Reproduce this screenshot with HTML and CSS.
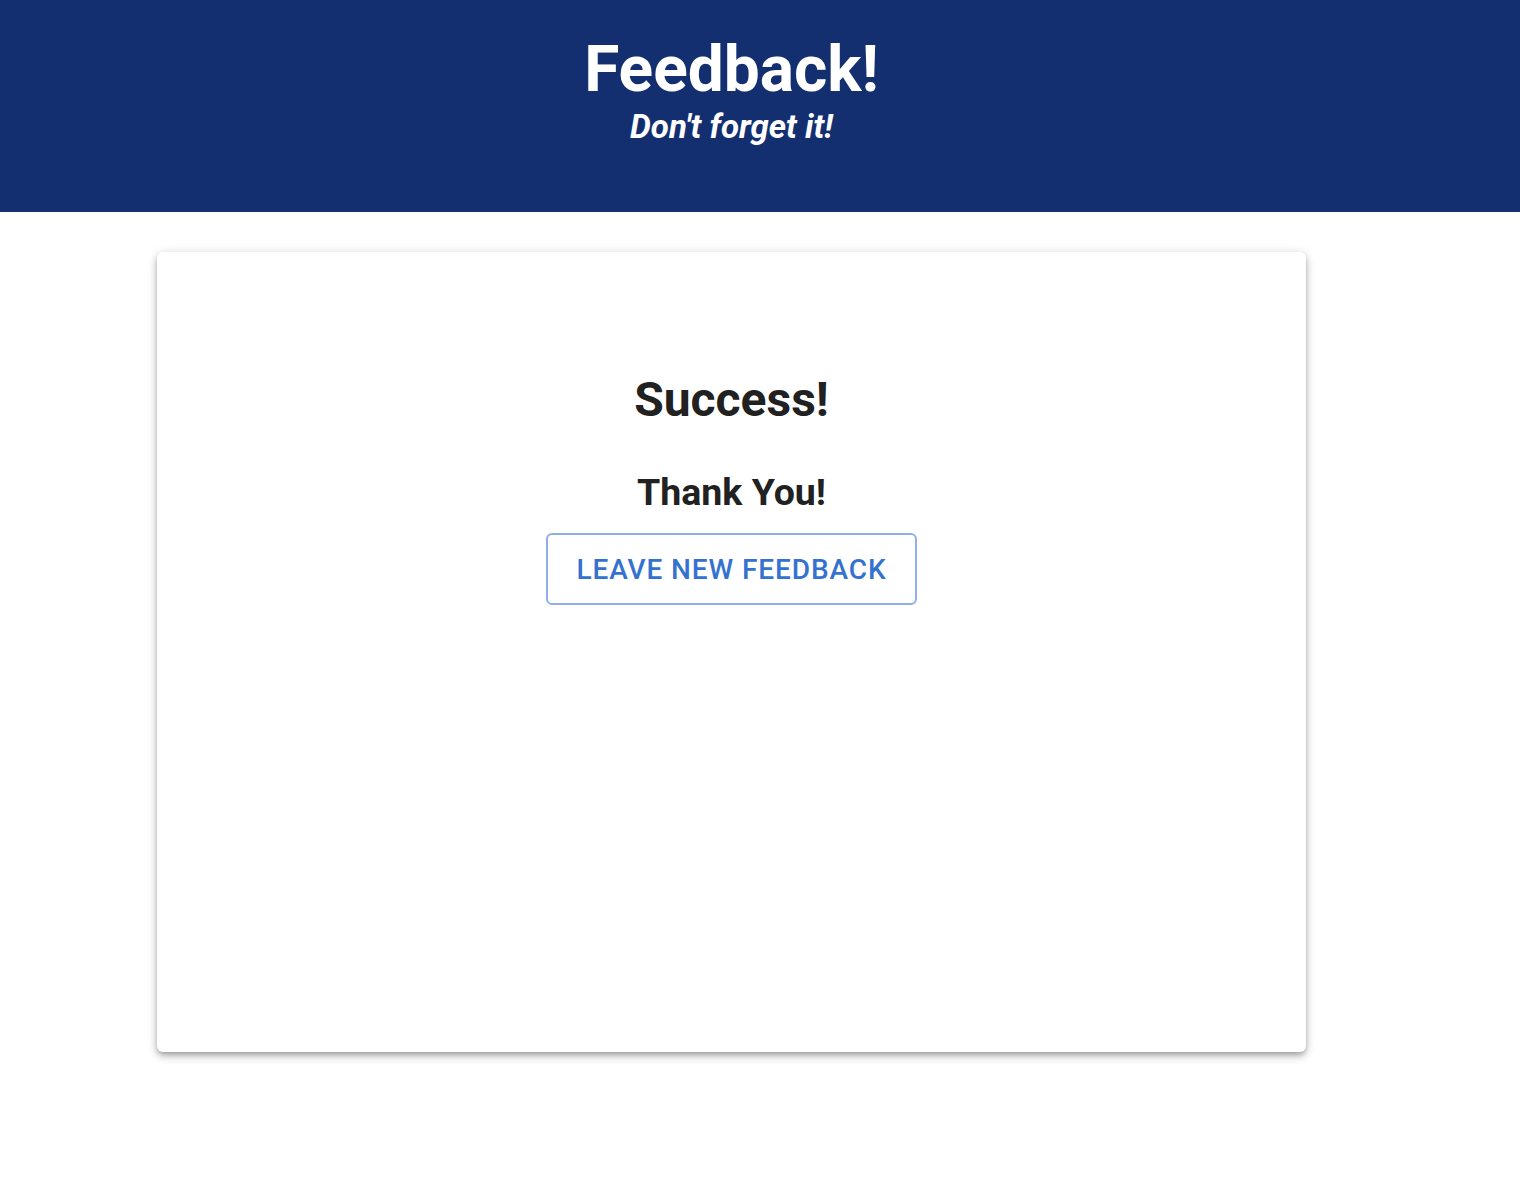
FILE: index.html
```html
<!DOCTYPE html>
<html lang="en">
<head>
<meta charset="utf-8">
<title>Feedback!</title>
<link rel="stylesheet" href="styles.css">
</head>
<body>
<header class="header">
  <div class="container header-inner">
    <h1 class="title">Feedback!</h1>
    <p class="subtitle">Don't forget it!</p>
  </div>
</header>
<main class="container main">
  <section class="card">
    <h2 class="success">Success!</h2>
    <h3 class="thanks">Thank You!</h3>
    <button class="btn" type="button">Leave New Feedback</button>
  </section>
</main>
</body>
</html>
```
FILE: styles.css
```css
* { box-sizing: border-box; }
html, body { margin: 0; padding: 0; background: #fff; }
body { font-family: Roboto, "Noto Sans", Arial, sans-serif; color: #212121; min-height: 1178px; }

.container { width: 1149px; margin-left: 157px; }
.main { padding-top: 40px; padding-bottom: 120px; }

.header { background: #132f70; height: 212px; }
.header-inner { padding-top: 30px; text-align: center; }
.title { margin: 0; color: #fff; font-size: 64px; font-weight: 700; line-height: 80px; }
.subtitle { margin: -2px 0 0; color: #fff; font-size: 33px; font-weight: 700; font-style: italic; line-height: 38px; }

.card {
  height: 800px;
  background: #fff;
  border-radius: 6px;
  box-shadow: 0 3px 5px -1px rgba(0,0,0,0.22), 0 5px 8px 0 rgba(0,0,0,0.16), 0 1px 12px 0 rgba(0,0,0,0.12);
  display: flex;
  flex-direction: column;
  align-items: center;
  padding-top: 118px;
}
.success { margin: 0; font-size: 48px; font-weight: 700; line-height: 60px; }
.thanks { margin: 40px 0 0; font-size: 37.5px; font-weight: 700; line-height: 44px; }
.btn {
  margin-top: 19px;
  width: 371px;
  height: 72px;
  background: #fff;
  border: 2px solid #8fb0e6;
  border-radius: 6px;
  color: #3472cf;
  font-family: inherit;
  font-size: 28px;
  font-weight: 500;
  letter-spacing: 0.9px;
  text-transform: uppercase;
  cursor: pointer;
}
```
